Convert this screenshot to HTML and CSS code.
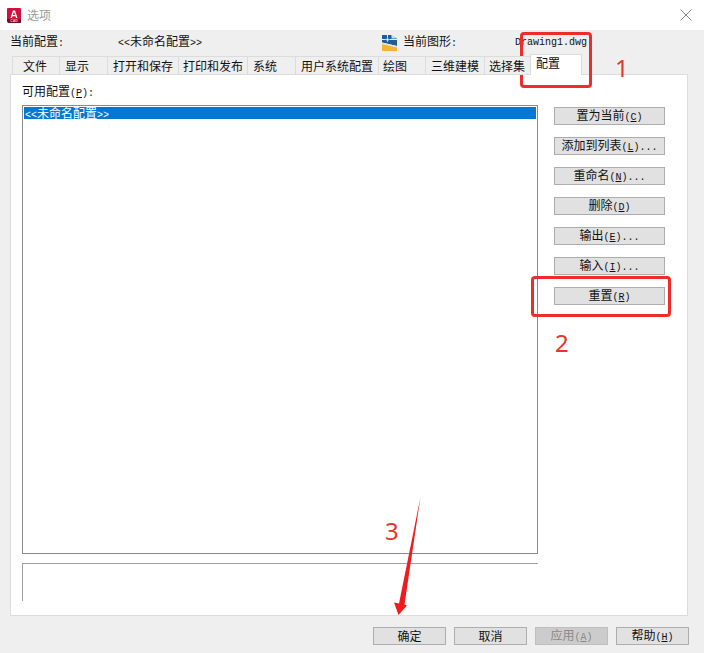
FILE: index.html
```html
<!DOCTYPE html>
<html lang="zh">
<head>
<meta charset="utf-8">
<title>选项</title>
<link rel="stylesheet" href="styles.css">
</head>
<body>
<div class="dialog">
  <header class="titlebar">
    <svg class="logo" width="14" height="15" viewBox="0 0 14 15"><path d="M1 0h12a1 1 0 0 1 1 1v13a1 1 0 0 1-1 1H1.500L0 13.500V1a1 1 0 0 1 1-1z" fill="#d0103f"/><path d="M0 11h14v3a1 1 0 0 1-1 1H1.500L0 13.500z" fill="#6e1024"/><path d="M3.500 10 6 2.500h2L10.500 10H9l-.5-1.700h-3L5 10zM5.900 7h2.200L7 3.700z" fill="#fff"/><text class="logo-cad" x="7" y="14.200" text-anchor="middle">CAD</text></svg>
    <span class="title">选项</span>
    <svg class="close" width="12" height="12" viewBox="0 0 12 12"><path d="M.5.500l11 11M11.500.500l-11 11" stroke="#8a8a8a" stroke-width="1" fill="none"/></svg>
  </header>
  <div class="body">
    <div class="profile-row">
      <span class="cur-label">当前配置<span class="m">:</span></span>
      <span class="cur-value"><span class="m">&lt;&lt;</span>未命名配置<span class="m">&gt;&gt;</span></span>
      <svg class="dwg-icon" width="15" height="16" viewBox="0 0 15 16"><path d="M0 0h9l6 3.500V11L0 7.500z" fill="#1f5d9a"/><path d="M9.500 0 15 3.500H9.500z" fill="#cfe0ee"/><path d="M0 7.500 15 11v1.500L0 9z" fill="#dfe6ea"/><path d="M0 9l15 3.500V16H0z" fill="#f2b632"/><path d="M0 4.500h15M5.500 0v7" stroke="#e8f0f6" stroke-width="1"/><circle cx="5.500" cy="4.500" r="1.500" fill="#fff" stroke="#1f5d9a" stroke-width=".6"/></svg>
      <span class="dwg-label">当前图形<span class="m">:</span></span>
      <span class="dwg-value">Drawing1.dwg</span>
    </div>
    <nav class="tabs">
      <span class="tab t1">文件</span>
      <span class="tab t2">显示</span>
      <span class="tab t3">打开和保存</span>
      <span class="tab t4">打印和发布</span>
      <span class="tab t5">系统</span>
      <span class="tab t6">用户系统配置</span>
      <span class="tab t7">绘图</span>
      <span class="tab t8">三维建模</span>
      <span class="tab t9">选择集</span>
      <span class="tab active">配置</span>
    </nav>
    <section class="panel">
      <div class="left">
        <div class="list-label">可用配置<span class="m">(<u>P</u>):</span></div>
        <div class="listbox"><div class="selected"><span class="m">&lt;&lt;</span>未命名配置<span class="m">&gt;&gt;</span></div></div>
        <div class="desc"></div>
      </div>
      <div class="actions">
        <button class="btn">置为当前<span class="m">(<u>C</u>)</span></button>
        <button class="btn">添加到列表<span class="m">(<u>L</u>)...</span></button>
        <button class="btn">重命名<span class="m">(<u>N</u>)...</span></button>
        <button class="btn">删除<span class="m">(<u>D</u>)</span></button>
        <button class="btn">输出<span class="m">(<u>E</u>)...</span></button>
        <button class="btn">输入<span class="m">(<u>I</u>)...</span></button>
        <button class="btn">重置<span class="m">(<u>R</u>)</span></button>
      </div>
    </section>
    <footer class="footer">
      <button class="btn fbtn">确定</button>
      <button class="btn fbtn">取消</button>
      <button class="btn fbtn disabled">应用<span class="m">(<u>A</u>)</span></button>
      <button class="btn fbtn">帮助<span class="m">(<u>H</u>)</span></button>
    </footer>
  </div>
</div>
<div class="mark box1"></div>
<div class="mark box2"></div>
<span class="num n1">1</span>
<span class="num n2">2</span>
<span class="num n3">3</span>
<svg class="arrow" width="32" height="120" viewBox="0 0 32 120"><path d="M29.500 0 13.500 107.500 16 108.500 7.500 118 3 105.500 8 106.500z" fill="#ee1c1c"/></svg>
</body>
</html>
```
FILE: styles.css
```css
* { box-sizing: border-box; }
html, body { margin: 0; padding: 0; }
body {
  width: 704px; height: 653px; position: relative; overflow: hidden; background: #fff;
  font: 12px/14px "Noto Sans CJK SC", "Liberation Sans", sans-serif; color: #111;
}
.m { font: 10px/14px "Liberation Mono", monospace; }
.dialog { display: flex; flex-direction: column; height: 653px; }
.titlebar { height: 30px; flex: none; display: flex; align-items: center; padding: 0 12px 0 7px; background: #fff; }
.logo { margin-right: 6px; }
.logo-cad { font: bold 3.500px "Liberation Sans", sans-serif; fill: #f4c9d2; }
.title { color: #9a9a9a; flex: 1; }
.body { flex: 1; background: #efefef; padding: 0 16px 8px 10px; display: flex; flex-direction: column; }
.profile-row { height: 24px; display: flex; align-items: center; flex: none; padding-top: 1px; }
.cur-label { width: 108px; }
.cur-value { width: 264px; }
.dwg-icon { margin-right: 6px; }
.dwg-label { width: 112px; }
.dwg-value { font: 10px/14px "Liberation Mono", monospace; }
.tabs { height: 21px; flex: none; display: flex; align-items: flex-end; padding-left: 2px; position: relative; z-index: 1; margin-bottom: -1px; }
.tab { height: 19px; border: 1px solid #dcdcdc; border-left: 0; background: #efefef; padding: 2px 0 0 5px; white-space: nowrap; overflow: hidden; }
.t1 { width: 48px; padding-left: 10px; border-left: 1px solid #dcdcdc; }
.t2 { width: 48px; }
.t3 { width: 71px; }
.t4 { width: 69px; padding-left: 4px; }
.t5 { width: 48px; }
.t6 { width: 83px; }
.t7 { width: 47px; padding-left: 4px; }
.t8 { width: 59px; }
.t9 { width: 45px; padding-left: 4px; border-right: 0; }
.active { width: 52px; height: 21px; background: #fff; border-bottom: 0; border-left: 1px solid #dcdcdc; padding: 1px 0 0 5px; }
.panel { width: 678px; height: 542px; flex: none; background: #fff; border: 1px solid #dcdcdc; padding: 9px 22px 0 11px; display: flex; justify-content: space-between; }
.left { width: 516px; display: flex; flex-direction: column; }
.list-label { height: 21px; }
.listbox { height: 449px; border: 1px solid #8a8a8a; padding: 1px; }
.selected { height: 12px; background: #0078d7; color: #fff; line-height: 12px; padding-left: 1px; }
.selected .m { line-height: 12px; }
.desc { margin-top: 9px; height: 38px; border-top: 1px solid #a0a0a0; border-left: 1px solid #a0a0a0; }
.actions { width: 111px; padding-top: 23px; display: flex; flex-direction: column; gap: 12px; }
.btn { height: 18px; width: 111px; padding: 0; background: #e1e1e1; border: 1px solid #adadad; font: inherit; line-height: 14px; color: #111; cursor: default; white-space: nowrap; }
.footer { flex: 1; display: flex; justify-content: flex-end; align-items: flex-end; gap: 8px; margin-right: -1px; }
.fbtn { width: 73px; }
.disabled { background: #cccccc; color: #8a8a8a; border-color: #bfbfbf; }
.mark { position: absolute; border: 3px solid #ee2c2c; border-radius: 4px; }
.box1 { left: 520px; top: 32px; width: 72px; height: 56px; }
.box2 { left: 531px; top: 276px; width: 140px; height: 41px; }
.num { position: absolute; font: 24px/28px "Noto Sans", sans-serif; color: #e0382c; }
.n1 { left: 615px; top: 54px; }
.n2 { left: 555px; top: 329px; }
.n3 { left: 385px; top: 517px; }
.arrow { position: absolute; left: 391px; top: 497px; }
```
